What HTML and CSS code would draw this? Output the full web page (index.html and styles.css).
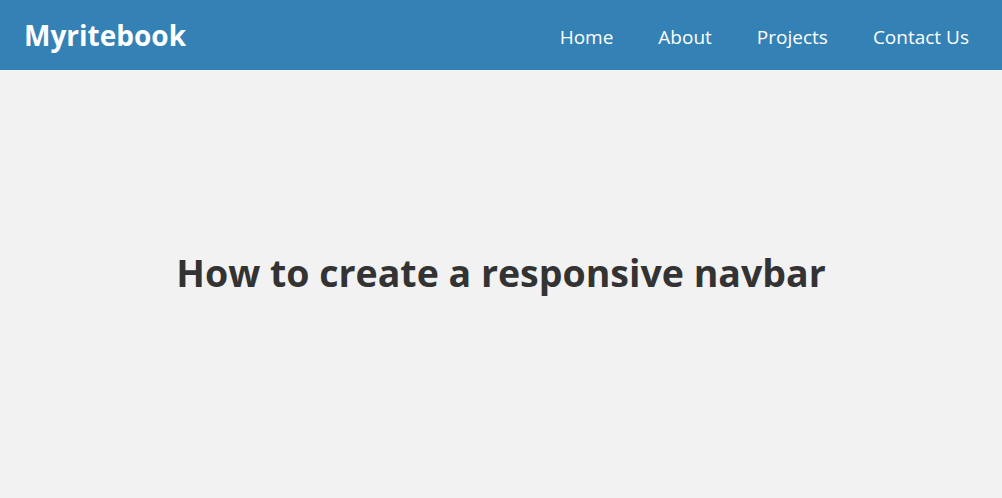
FILE: index.html
```html
<!DOCTYPE html>
<html lang="en">
<head>
<meta charset="utf-8">
<title>Myritebook</title>
<link rel="stylesheet" href="styles.css">
</head>
<body>
<header class="navbar">
  <a class="logo" href="#">Myritebook</a>
  <ul class="nav-links">
    <li><a href="#">Home</a></li>
    <li><a href="#">About</a></li>
    <li><a href="#">Projects</a></li>
    <li><a href="#">Contact Us</a></li>
  </ul>
</header>
<main class="hero">
  <h1 class="title">How to create a responsive navbar</h1>
</main>
</body>
</html>
```
FILE: styles.css
```css
* { box-sizing: border-box; }
html, body { margin: 0; padding: 0; }
body {
  background: #f2f2f2;
  font-family: "Open Sans", "Noto Sans", sans-serif;
  height: 498px;
  display: flex;
  flex-direction: column;
}
.navbar {
  height: 70px;
  background: #3481b6;
  display: flex;
  align-items: center;
  justify-content: space-between;
  padding: 0 33px 0 24px;
}
.logo {
  color: #fff;
  text-decoration: none;
  font-weight: 700;
  font-size: 28px;
}
.nav-links {
  list-style: none;
  margin: 0;
  padding: 3px 0 0;
  display: flex;
  gap: 45px;
}
.nav-links a {
  color: #fff;
  text-decoration: none;
  font-size: 19px;
}
.hero {
  flex: 1;
  display: flex;
  align-items: center;
  justify-content: center;
  padding-bottom: 24px;
}
.title {
  margin: 0;
  color: #333;
  font-size: 37.5px;
  font-weight: 700;
}
```
